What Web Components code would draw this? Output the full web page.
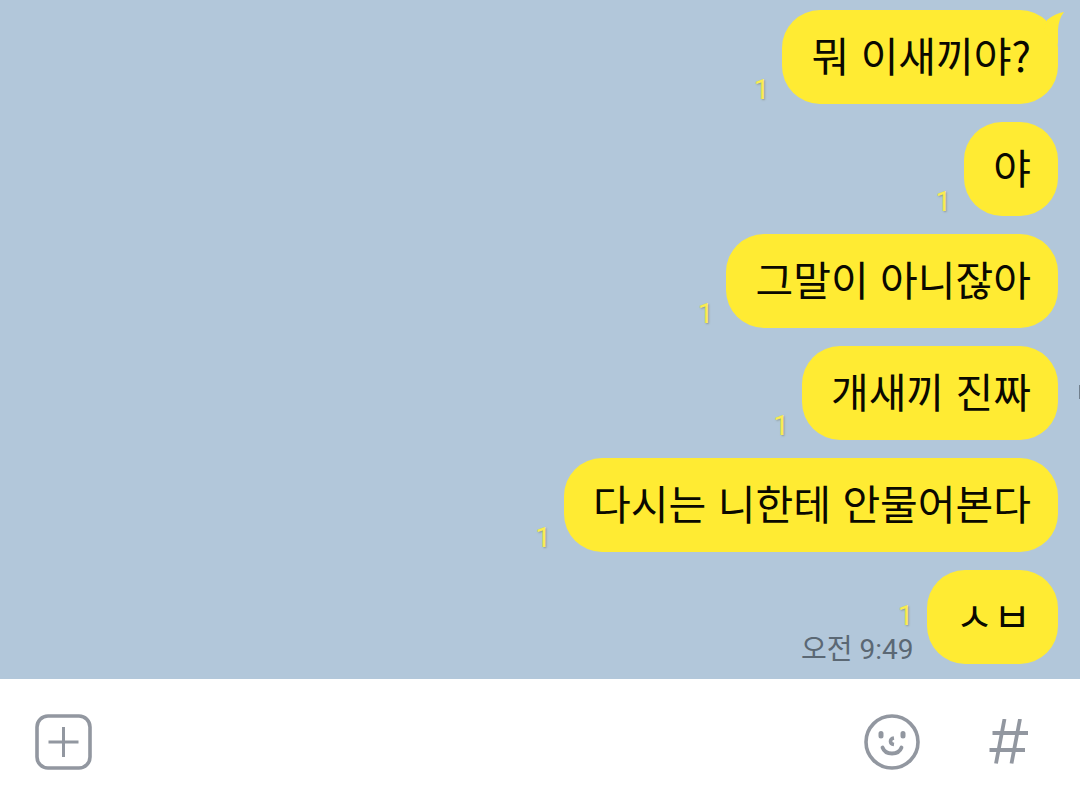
<!DOCTYPE html>
<html lang="ko">
<head>
<meta charset="utf-8">
<meta name="viewport" content="width=device-width, initial-scale=1">
<title>채팅</title>
<style>
html, body { height: 100%; margin: 0; }
body { font-family: "Noto Sans CJK KR", "Noto Sans", sans-serif; background: #b2c7da; }
</style>
</head>
<body>
<chat-room>
  <chat-message unread="1" tail>뭐 이새끼야?</chat-message>
  <chat-message unread="1">야</chat-message>
  <chat-message unread="1">그말이 아니잖아</chat-message>
  <chat-message unread="1">개새끼 진짜</chat-message>
  <chat-message unread="1">다시는 니한테 안물어본다</chat-message>
  <chat-message unread="1" time="오전 9:49">ㅅㅂ</chat-message>
  <message-bar slot="footer"></message-bar>
</chat-room>
<script>
class ChatRoom extends HTMLElement {
  constructor() {
    super();
    this.attachShadow({ mode: 'open' }).innerHTML = `
      <style>
        :host { display: flex; flex-direction: column; min-height: 100vh; }
        main { position: relative; flex: 1; display: flex; flex-direction: column;
          justify-content: flex-end; gap: 18px; padding: 10px 22px 15px; background: #b2c7da; }
        .thumb { position: absolute; right: 0; bottom: 280px; width: 1px; height: 14px; background: #71808e; }
      </style>
      <main><slot></slot><span class="thumb"></span></main>
      <slot name="footer"></slot>`;
  }
}

class ChatMessage extends HTMLElement {
  connectedCallback() {
    const root = this.attachShadow({ mode: 'open' });
    const time = this.getAttribute('time');
    root.innerHTML = `
      <style>
        :host { display: flex; justify-content: flex-end; align-items: flex-end; gap: 13px; }
        .meta { display: flex; flex-direction: column; align-items: flex-end; gap: 6px;
          font: 28px/28px Roboto, "Noto Sans CJK KR", sans-serif; }
        .unread { color: #faec50; text-shadow: 1px 1px 2px #8c9a90; }
        time { color: #5b6874; }
        .bubble { position: relative; box-sizing: border-box; min-height: 94px; padding: 13px 27px 19px 29px;
          border-radius: 38px; background: #ffeb33; color: #0a0900;
          font-size: 41px; line-height: 62px; }
        .tail { position: absolute; top: 2px; right: -6px; width: 24px; height: 34px; fill: #ffeb33; }
      </style>
      <div class="meta"><span class="unread"></span></div>
      <div class="bubble"><slot></slot></div>`;
    root.querySelector('.unread').textContent = this.getAttribute('unread');
    if (time) {
      const t = document.createElement('time');
      t.textContent = time;
      root.querySelector('.meta').append(t);
    }
    if (this.hasAttribute('tail')) {
      root.querySelector('.bubble').insertAdjacentHTML('beforeend',
        '<svg class="tail" viewBox="0 0 24 34" aria-hidden="true"><path d="M7 8Q15 1.500 24 0Q18.500 7 18 18V32L4 20Z"/></svg>');
    }
  }
}

class MessageBar extends HTMLElement {
  constructor() {
    super();
    this.attachShadow({ mode: 'open' }).innerHTML = `
      <style>
        :host { display: flex; align-items: center; box-sizing: border-box; min-height: 126px;
          padding: 0 51px 0 35px; background: #fff; }
        button { display: flex; padding: 0; border: 0; background: none; color: #9297a0; }
        svg { display: block; fill: none; stroke: currentColor; }
        input { flex: 1; min-width: 0; height: 64px; margin: 0 24px; border: 0; outline: 0;
          background: none; font: inherit; font-size: 41px; }
        .emoji { margin-right: 68px; }
      </style>
      <button type="button" aria-label="첨부">
        <svg width="57" height="56" viewBox="0 0 57 56">
          <rect x="2" y="2" width="53" height="52" rx="11" stroke-width="3.6"/>
          <path d="M28.5 13v30M13.5 28h30" stroke-width="3"/>
        </svg>
      </button>
      <input type="text" aria-label="메시지">
      <button type="button" class="emoji" aria-label="이모티콘">
        <svg width="58" height="58" viewBox="0 0 58 58">
          <circle cx="29" cy="29" r="26" stroke-width="3.6"/>
          <path d="M18 20.500v2.500M40 20.500v2.500" stroke-width="5" stroke-linecap="round"/>
          <path d="M31 25Q27.500 25.500 27.500 28.300T31 31.500" stroke-width="3.6"/>
          <path d="M19.500 34.500C22.500 42.500 35.500 42.500 38.500 34.500" stroke-width="3.8" stroke-linecap="round"/>
        </svg>
      </button>
      <button type="button" aria-label="샵 검색">
        <svg width="40" height="46" viewBox="0 0 40 46" stroke-width="3.8">
          <path d="M15.500 0L7 44.500M31 0L22.500 44.500M3.500 14H39M.5 31H36"/>
        </svg>
      </button>`;
  }
}

customElements.define('chat-room', ChatRoom);
customElements.define('chat-message', ChatMessage);
customElements.define('message-bar', MessageBar);
</script>
</body>
</html>
